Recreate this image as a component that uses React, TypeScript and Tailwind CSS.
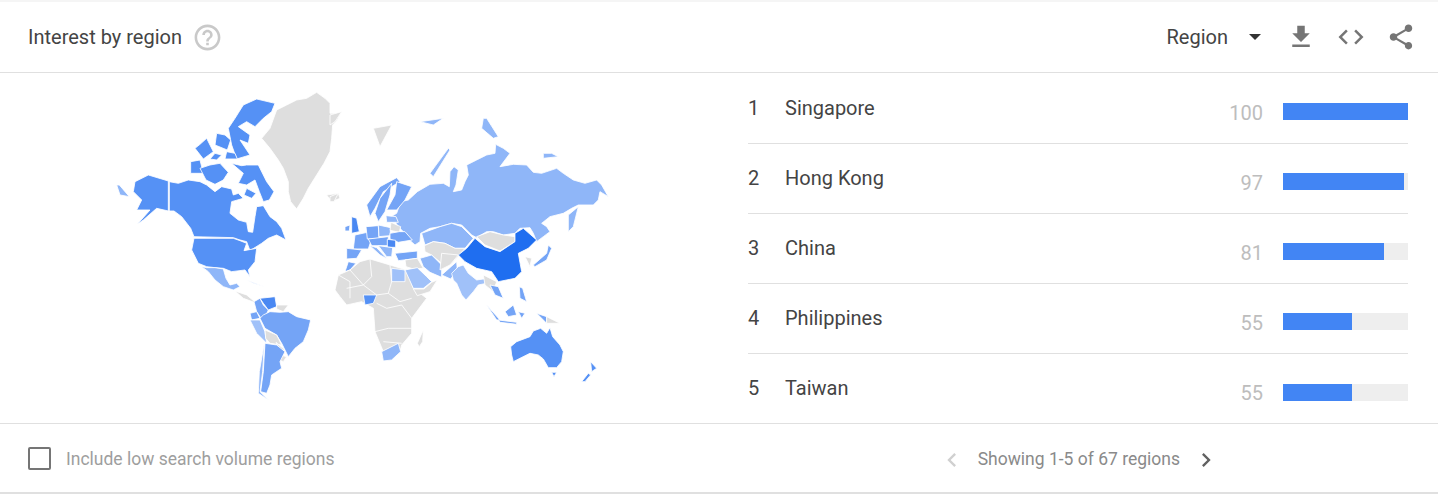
const font = { fontFamily: 'Roboto, sans-serif' };

const rows = [
  { rank: 1, name: 'Singapore', value: 100 },
  { rank: 2, name: 'Hong Kong', value: 97 },
  { rank: 3, name: 'China', value: 81 },
  { rank: 4, name: 'Philippines', value: 55 },
  { rank: 5, name: 'Taiwan', value: 55 },
];

const GRAY = '#dedede';
const C1 = '#5591f5';
const C2 = '#8fb6f8';
const C3 = '#74a4f6';
const C4 = '#a0c1f9';
const C5 = '#4a88f2';

// map shapes, written in the coordinates of the two halves of the picture
const west: [string, string][] = [
  // greenland, iceland
  [GRAY, '485,160 510,130 530,75 560,60 590,45 620,40 650,22 675,40 690,55 690,85 722,85 712,105 698,120 695,160 690,200 672,235 650,270 625,310 610,340 590,372 572,350 565,320 565,290 550,250 535,225 510,190'],
  [GRAY, '680,330 715,325 720,340 695,350'],
  // canada mainland
  [C1, '208,290 235,295 265,285 300,290 320,300 345,320 365,305 395,312 400,330 415,325 430,340 395,350 390,385 415,405 440,412 445,440 458,442 465,395 470,365 490,362 510,395 530,410 545,430 558,465 530,450 505,460 485,475 450,497 440,470 420,465 400,458 282,455 272,430 245,395 222,378 208,378'],
  // arctic islands
  [C1, '405,100 430,60 470,42 525,55 515,80 490,100 465,125 440,110 415,125 450,150 445,175 420,165 450,210 410,222 395,180 385,130'],
  [C1, '285,190 300,178 320,160 340,200 310,222'],
  [C1, '350,145 375,150 392,165 382,195 345,180'],
  [C1, '380,200 405,205 412,222 375,222'],
  [C1, '272,230 300,225 310,265 272,265'],
  [C1, '300,250 330,240 360,235 385,262 370,285 345,298 318,285'],
  [C1, '395,235 425,242 440,240 475,240 490,270 500,290 522,320 508,345 490,350 478,320 465,285 440,300 415,295 430,265'],
  [C1, '345,205 365,210 350,225 330,222'],
  [C1, '440,310 468,325 455,340 432,330'],
  // alaska
  [C2, '50,300 58,300 88,335 60,330'],
  [C1, '105,290 145,270 205,288 205,378 170,370 130,405 112,418 150,375 110,375 125,345 100,320'],
  // usa, mexico, central america
  [C1, '282,460 400,460 420,467 440,475 432,497 470,490 465,530 445,555 450,575 435,555 395,560 370,550 345,548 320,545 295,535 275,495'],
  [C2, '305,545 320,548 345,548 370,552 378,580 390,600 410,595 420,605 400,615 370,605 345,585 325,560'],
  [GRAY, '405,618 440,630 470,655 430,640'],
  [C2, '440,585 480,600 495,605 460,595'],
  // south america
  [C3, '462,650 480,640 490,660 505,675 490,710 470,680'],
  [C5, '480,640 525,635 530,665 505,675 490,655'],
  [GRAY, '530,660 565,660 550,680 530,672'],
  [C3, '450,685 470,680 480,700 455,705'],
  [C4, '450,705 480,705 495,740 500,775 470,745'],
  [C3, '480,700 490,690 510,680 540,682 565,680 590,695 632,705 625,735 610,770 585,790 565,815 555,795 545,775 530,750 495,730'],
  [GRAY, '495,735 530,750 545,780 510,775 497,760'],
  [GRAY, '528,772 555,795 540,795'],
  [GRAY, '540,810 560,815 550,830 538,825'],
  [C3, '495,775 530,780 555,800 540,830 545,850 515,870 510,900 500,925 482,920 490,860'],
  [C2, '493,775 488,860 480,920 505,945 475,925 478,860'],
];

const east: [string, string][] = [
  // arctic
  [GRAY, '0,90 35,80 15,110 0,120'],
  [GRAY, '0,335 25,325 12,350 0,350'],
  [GRAY, '130,130 185,120 150,185'],
  [C2, '270,110 340,100 310,120'],
  [C2, '460,100 470,100 505,155 490,160 455,130'],
  [C2, '640,205 665,205 685,215 640,220'],
  [C2, '300,265 355,190 360,195 310,275'],
  // russia
  [C2, '200,385 212,350 235,345 262,320 300,298 340,295 358,305 360,260 372,245 385,255 378,300 370,320 395,315 405,290 415,270 410,240 440,225 470,210 495,205 497,178 520,190 540,205 525,225 510,245 550,238 590,240 610,262 635,265 680,250 700,265 730,285 765,295 800,285 815,300 835,335 810,320 805,345 790,360 745,360 725,370 700,385 660,395 635,415 650,425 660,440 640,455 620,470 610,445 600,428 570,430 555,445 520,450 490,440 470,440 440,458 425,450 395,420 365,415 330,425 300,430 272,445 270,470 255,480 235,462 220,440 205,425 195,410 175,400'],
  [C2, '715,390 745,365 730,425 715,440'],
  // scandinavia
  [C3, '110,360 150,305 200,278 210,290 160,320 135,370 120,395'],
  [C3, '135,385 150,340 185,295 180,330 165,380 145,410'],
  [C3, '200,290 245,305 225,345 200,375 170,375 195,330'],
  // western europe
  [C5, '65,395 80,400 88,440 65,445'],
  [C3, '45,425 60,420 58,438 45,438'],
  [C3, '75,450 112,442 122,470 115,492 70,492'],
  [C3, '50,490 95,495 80,520 50,522'],
  [C3, '45,560 55,530 78,535 60,555'],
  [C3, '108,425 145,422 147,460 112,462'],
  [C2, '145,420 182,428 180,452 147,455'],
  [C2, '168,392 198,395 205,412 170,412'],
  [GRAY, '183,412 212,425 208,442 180,436'],
  [C3, '180,445 208,440 225,440 247,465 205,472 180,462'],
  [C3, '115,462 175,455 175,482 125,482'],
  [C5, '172,463 197,466 197,487 172,487'],
  [C2, '120,482 140,488 172,522 150,510'],
  [C2, '145,482 188,488 185,515 170,515'],
  [C3, '195,505 262,498 262,520 205,527'],
  // africa
  [GRAY, '15,615 25,570 60,555 90,530 120,522 180,540 230,555 250,610 290,640 245,700 245,745 215,780 210,800 160,800 135,740 130,670 95,650 50,660 30,635'],
  [C1, '100,630 140,630 130,655 105,660'],
  [C2, '155,800 205,775 212,800 185,825 160,828'],
  [C4, '185,550 225,555 225,590 185,590'],
  [GRAY, '262,775 280,735 278,770 268,785'],
  // middle east and central asia
  [C2, '275,445 330,425 365,415 395,425 430,460 405,490 375,490 345,475 310,470 285,480'],
  [GRAY, '283,482 310,470 345,475 375,490 405,490 388,510 362,540 335,535 305,510 285,500'],
  [GRAY, '225,525 262,520 280,550 250,552 228,545'],
  [C2, '270,520 305,510 335,540 335,577 300,562 280,545'],
  [GRAY, '335,505 385,510 360,540 330,555'],
  [C2, '335,570 380,530 382,555 362,582'],
  [C4, '225,555 262,548 290,575 305,590 280,610 250,610'],
  [GRAY, '250,612 282,612 305,592 322,585 300,620 262,632'],
  [C4, '365,565 385,545 400,540 415,565 440,585 475,580 470,595 445,600 430,620 408,645 395,630 380,595 370,585'],
  // east asia
  [GRAY, '440,455 480,440 520,450 555,455 555,470 510,498 465,480'],
  ['#1f6ef0', '385,510 410,490 435,460 465,485 510,500 555,470 555,445 580,430 620,465 595,490 565,505 575,560 555,580 505,590 485,560 440,550 405,530'],
  [GRAY, '585,515 605,520 600,545'],
  [C3, '610,540 650,505 655,480 665,490 650,525 615,545'],
  // south east asia
  [GRAY, '460,570 500,590 490,620 465,600'],
  [C3, '480,600 505,605 520,640 495,630'],
  [C3, '568,605 578,610 590,650 570,640'],
  [C3, '525,680 550,660 560,690 535,695'],
  [C3, '470,660 510,705 500,705'],
  [C3, '505,705 560,712 560,718 510,712'],
  [C3, '565,680 585,685 575,700'],
  [C3, '620,685 650,695 650,715'],
  [GRAY, '650,695 690,715 650,715'],
  // oceania
  [C1, '542,785 560,770 600,755 610,738 632,730 650,745 660,728 668,755 690,780 700,800 695,830 680,848 655,848 640,822 625,810 600,805 570,820 550,830 545,810'],
  [C1, '665,862 680,862 672,875'],
  [C1, '755,890 775,865 782,870 765,890'],
  [C1, '782,830 800,850 785,860'],
];

// country borders inside africa
const africaBorders = [
  '120,522 125,575 100,600',
  '60,555 100,600 140,630',
  '180,540 185,590 175,625 210,650 245,640',
  '140,655 170,670 215,660 245,700',
  '135,740 175,730 245,730',
  '160,770 215,775',
  '50,610 100,600',
  '25,570 60,590 60,640',
  '175,625 140,630',
];

function WorldMap() {
  return (
    <svg width="520" height="320" viewBox="0 0 520 320" className="block ml-[100px] mt-[12px]">
      <g transform="scale(0.3333)" stroke="#ffffff" strokeWidth="2.5" strokeLinejoin="round">
        {west.map(([fill, points], i) => (
          <polygon key={i} fill={fill} points={points} />
        ))}
      </g>
      <g transform="translate(230 0) scale(0.3333)" stroke="#ffffff" strokeWidth="2.5" strokeLinejoin="round">
        {east.map(([fill, points], i) => (
          <polygon key={i} fill={fill} points={points} />
        ))}
        {africaBorders.map((points, i) => (
          <polyline key={i} fill="none" points={points} />
        ))}
      </g>
    </svg>
  );
}

function Icon({ d, className }: { d: string; className: string }) {
  return (
    <svg viewBox="0 0 24 24" className={className} fill="currentColor">
      <path d={d} />
    </svg>
  );
}

export default function App() {
  return (
    <div className="w-[1438px] h-[495px] bg-white overflow-hidden" style={font}>
      <div className="h-[2px] bg-[#f5f5f5]" />

      {/* Header */}
      <div className="flex items-center justify-between h-[71px] pl-[28px] pr-[22px] border-b border-[#e0e0e0]">
        <div className="flex items-center gap-[10px]">
          <span className="text-[20px] text-[#444]">Interest by region</span>
          <Icon
            className="w-[31px] h-[31px] text-[#c9c9c9]"
            d="M11 18h2v-2h-2v2zm1-16C6.48 2 2 6.48 2 12s4.48 10 10 10 10-4.48 10-10S17.52 2 12 2zm0 18c-4.41 0-8-3.59-8-8s3.59-8 8-8 8 3.59 8 8-3.59 8-8 8zm0-14c-2.21 0-4 1.79-4 4h2c0-1.1.9-2 2-2s2 .9 2 2c0 2-3 1.75-3 5h2c0-2.25 3-2.5 3-5 0-2.21-1.79-4-4-4z"
          />
        </div>
        <div className="flex items-center">
          <span className="text-[20px] text-[#444]">Region</span>
          <div className="ml-[21px] mr-[25px] w-0 h-0 border-x-[6.5px] border-x-transparent border-t-[6.5px] border-t-[#333]" />
          <div className="flex items-center gap-[20px] text-[#757575]">
            <Icon className="w-[30px] h-[30px]" d="M19 9h-4V3H9v6H5l7 7 7-7zM5 18v2h14v-2H5z" />
            <Icon className="w-[30px] h-[30px]" d="M9.4 16.6L4.8 12l4.6-4.6L8 6l-6 6 6 6 1.4-1.4zm5.2 0l4.6-4.6-4.6-4.6L16 6l6 6-6 6-1.4-1.4z" />
            <Icon
              className="w-[30px] h-[30px]"
              d="M18 16.08c-.76 0-1.44.3-1.96.77L8.91 12.7c.05-.23.09-.46.09-.7s-.04-.47-.09-.7l7.05-4.11c.54.5 1.25.81 2.04.81 1.66 0 3-1.34 3-3s-1.34-3-3-3-3 1.34-3 3c0 .24.04.47.09.7L8.04 9.81C7.5 9.31 6.79 9 6 9c-1.66 0-3 1.34-3 3s1.34 3 3 3c.79 0 1.5-.31 2.04-.81l7.12 4.16c-.05.21-.08.43-.08.65 0 1.61 1.31 2.92 2.92 2.92 1.61 0 2.92-1.31 2.92-2.92s-1.31-2.92-2.92-2.92z"
            />
          </div>
        </div>
      </div>

      {/* Body */}
      <div className="flex h-[350px]">
        <div className="w-[748px]">
          <WorldMap />
        </div>
        <div className="w-[660px] pt-[1px]">
          {rows.map((row, i) => (
            <div
              key={row.rank}
              className={`flex items-center h-[70px] text-[#444] ${i < rows.length - 1 ? 'border-b border-[#e0e0e0]' : ''}`}
            >
              <span className="w-[37px] text-[20px] -mt-[2px]">{row.rank}</span>
              <span className="flex-1 text-[20px] -mt-[2px]">{row.name}</span>
              <span className="text-[20px] text-[#bdbdbd] mt-[8px]">{row.value}</span>
              <div className="w-[125px] h-[17px] ml-[20px] mt-[6px] bg-[#eeeeee]">
                <div className="h-full bg-[#4285f4]" style={{ width: `${row.value}%` }} />
              </div>
            </div>
          ))}
        </div>
      </div>

      {/* Footer */}
      <div className="flex items-center justify-between h-[71px] pl-[28px] border-t border-[#e0e0e0] border-b-2 border-b-[#e0e0e0]">
        <div className="flex items-center gap-[15px]">
          <div className="w-[23px] h-[23px] rounded-[2px] border-2 border-[#757575]" />
          <span className="text-[17.5px] text-[#9e9e9e] mt-[3px]">Include low search volume regions</span>
        </div>
        <div className="flex items-center mr-[218px] mt-[3px]">
          <Icon className="w-[28px] h-[28px] text-[#d0d0d0]" d="M15.41 7.41L14 6l-6 6 6 6 1.41-1.41L10.83 12z" />
          <span className="text-[17.5px] text-[#8a8a8a] mx-[12px]">Showing 1-5 of 67 regions</span>
          <Icon className="w-[28px] h-[28px] text-[#616161]" d="M10 6L8.59 7.41 13.17 12l-4.58 4.59L10 18l6-6z" />
        </div>
      </div>
    </div>
  );
}
